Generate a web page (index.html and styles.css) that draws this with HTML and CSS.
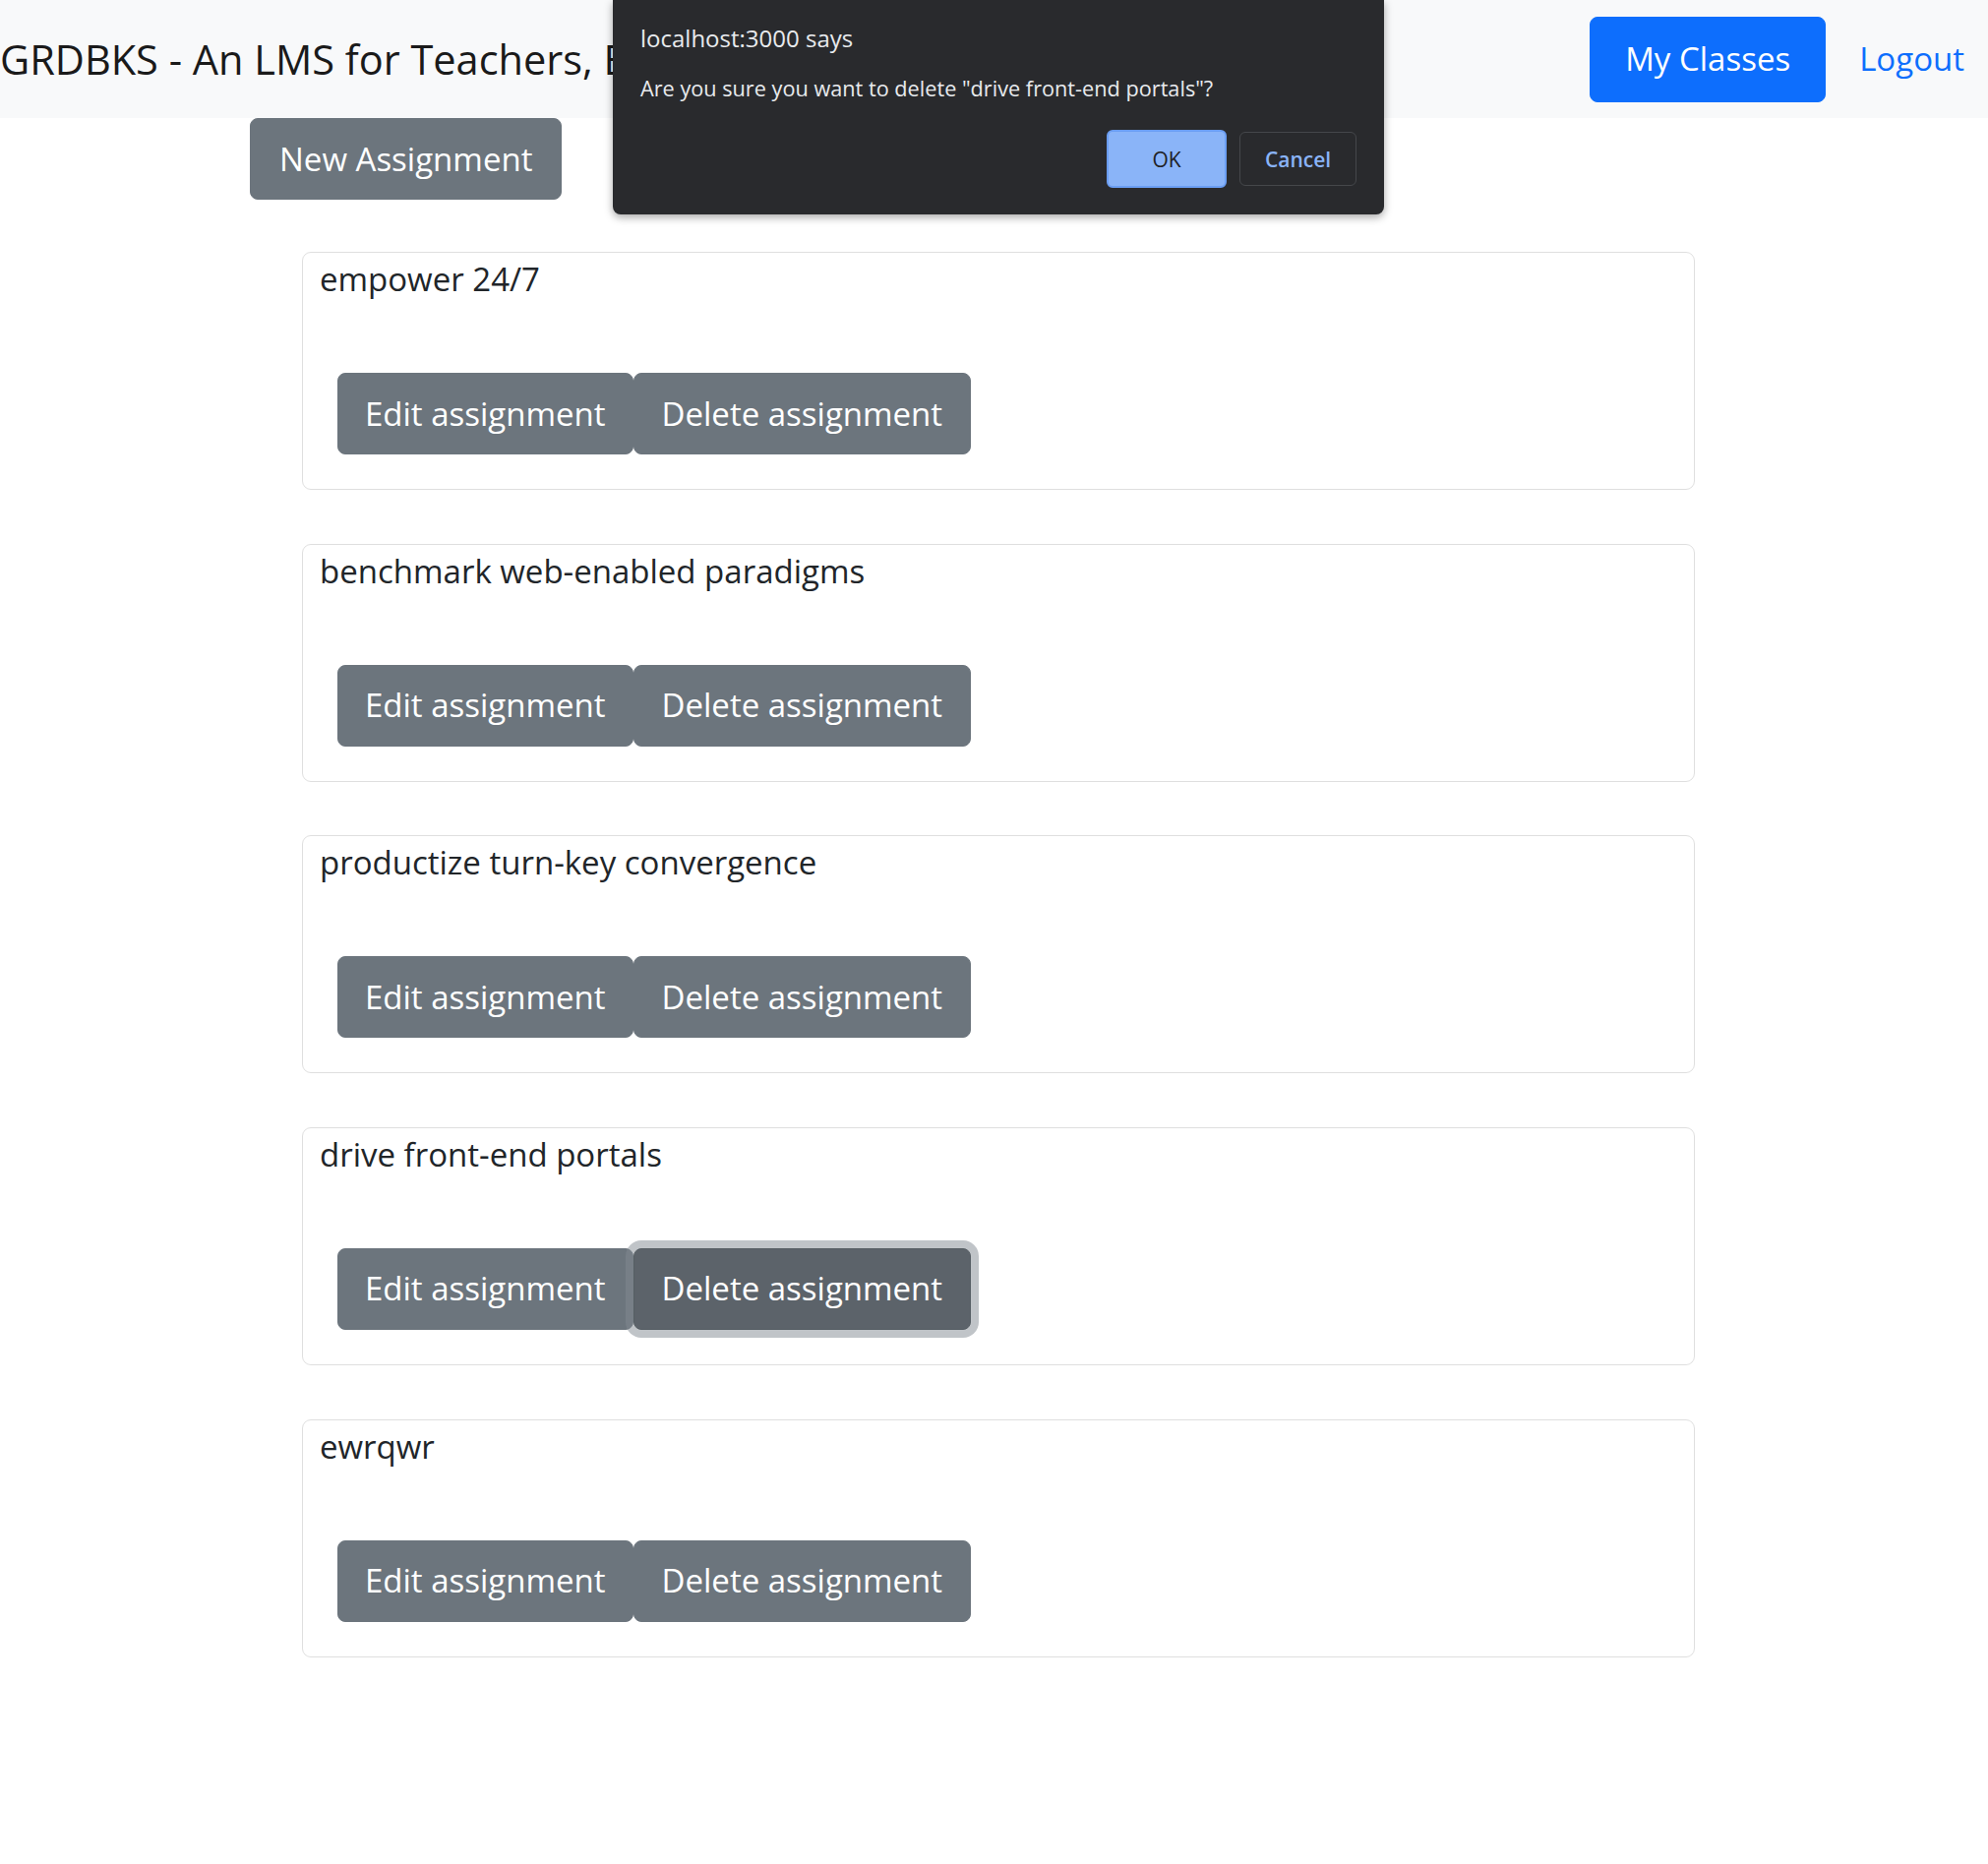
FILE: index.html
```html
<!DOCTYPE html>
<html lang="en">
<head>
<meta charset="utf-8">
<title>GRDBKS - Assignments</title>
<link rel="stylesheet" href="styles.css">
</head>
<body>
<nav class="navbar">
  <span class="brand">GRDBKS - An LMS for Teachers, By Teachers</span>
  <div class="nav-right">
    <a class="btn btn-primary" href="#">My Classes</a>
    <a class="nav-link" href="#">Logout</a>
  </div>
</nav>
<main class="page">
  <div class="toolbar">
    <button class="btn btn-secondary btn-new" type="button">New Assignment</button>
  </div>
  <ul class="assignments">
    <li class="card">
      <p class="card-title">empower 24/7</p>
      <div class="card-actions">
        <button class="btn btn-secondary" type="button">Edit assignment</button>
        <button class="btn btn-secondary btn-delete" type="button">Delete assignment</button>
      </div>
    </li>
    <li class="card">
      <p class="card-title">benchmark web-enabled paradigms</p>
      <div class="card-actions">
        <button class="btn btn-secondary" type="button">Edit assignment</button>
        <button class="btn btn-secondary btn-delete" type="button">Delete assignment</button>
      </div>
    </li>
    <li class="card">
      <p class="card-title">productize turn-key convergence</p>
      <div class="card-actions">
        <button class="btn btn-secondary" type="button">Edit assignment</button>
        <button class="btn btn-secondary btn-delete" type="button">Delete assignment</button>
      </div>
    </li>
    <li class="card">
      <p class="card-title">drive front-end portals</p>
      <div class="card-actions">
        <button class="btn btn-secondary" type="button">Edit assignment</button>
        <button class="btn btn-secondary btn-delete is-focused" type="button">Delete assignment</button>
      </div>
    </li>
    <li class="card">
      <p class="card-title">ewrqwr</p>
      <div class="card-actions">
        <button class="btn btn-secondary" type="button">Edit assignment</button>
        <button class="btn btn-secondary btn-delete" type="button">Delete assignment</button>
      </div>
    </li>
  </ul>
</main>
<div class="dialog" role="alertdialog">
  <div class="dialog-origin">localhost:3000 says</div>
  <div class="dialog-message">Are you sure you want to delete "drive front-end portals"?</div>
  <div class="dialog-actions">
    <button class="dialog-btn dialog-ok" type="button">OK</button>
    <button class="dialog-btn dialog-cancel" type="button">Cancel</button>
  </div>
</div>
</body>
</html>
```
FILE: styles.css
```css
html, body {
  margin: 0;
  padding: 0;
  background: #fff;
}

body {
  font-family: "Open Sans", "Noto Sans", sans-serif;
  color: #212529;
  position: relative;
  min-height: 1895px;
}

.navbar {
  display: flex;
  align-items: center;
  justify-content: space-between;
  height: 120px;
  box-sizing: border-box;
  padding: 0 24px 0 0;
  background: #f8f9fa;
}

.brand {
  font-size: 41.5px;
  line-height: normal;
  color: #1a1a1a;
  white-space: nowrap;
}

.nav-right {
  display: flex;
  align-items: center;
}

.nav-link {
  margin-left: 34px;
  font-size: 33px;
  line-height: 54px;
  color: #0d6efd;
  text-decoration: none;
}

.btn {
  display: inline-block;
  font-family: "Open Sans", "Noto Sans", sans-serif;
  font-size: 33px;
  line-height: 54px;
  padding: 13.5px 27px;
  border: 1px solid transparent;
  border-radius: 8px;
  color: #fff;
  text-decoration: none;
  white-space: nowrap;
  cursor: pointer;
}

.btn-primary {
  background: #0d6efd;
  border-color: #0d6efd;
  padding: 15.5px 35px;
}

.btn-secondary {
  background: #6c757d;
  border-color: #6c757d;
}

.btn-new {
  padding-left: 29px;
  padding-right: 29px;
}

.btn-delete {
  padding-left: 28px;
  padding-right: 28px;
}

.btn-secondary.is-focused {
  background: #5c636a;
  border-color: #565e64;
  box-shadow: 0 0 0 8px rgba(130, 138, 145, 0.5);
}

.toolbar {
  padding-left: 254px;
}

.assignments {
  list-style: none;
  margin: 53px 0 0 307px;
  padding: 0;
  width: 1416px;
}

.card {
  border: 1px solid rgba(0, 0, 0, 0.125);
  border-radius: 9px;
  padding: 0 17px;
  margin-bottom: 54.67px;
}

.card-title {
  margin: 0;
  font-size: 33px;
  line-height: 54px;
  color: #212529;
}

.card-actions {
  display: flex;
  margin: 68px 0 35px 18px;
}

.dialog {
  position: absolute;
  top: 0;
  left: 623px;
  width: 784px;
  box-sizing: border-box;
  padding: 23px 28px 27px 28px;
  background: #292a2d;
  color: #e8eaed;
  border-radius: 0 0 8px 8px;
  box-shadow: 0 3px 8px rgba(0, 0, 0, 0.35);
}

.dialog-origin {
  font-size: 24px;
  line-height: 32px;
}

.dialog-message {
  margin-top: 20px;
  font-size: 21.7px;
  line-height: 30px;
}

.dialog-actions {
  display: flex;
  justify-content: flex-end;
  align-items: center;
  gap: 13px;
  margin-top: 27px;
}

.dialog-btn {
  box-sizing: border-box;
  font-family: "Open Sans", "Noto Sans", sans-serif;
  font-size: 21px;
  border-radius: 6px;
  padding: 0;
}

.dialog-ok {
  width: 122px;
  height: 59px;
  background: #8ab4f8;
  border: 2px solid #6b9ef3;
  color: #202124;
  font-weight: 500;
}

.dialog-cancel {
  width: 119px;
  height: 55px;
  background: transparent;
  border: 1px solid #45474b;
  color: #8ab4f8;
  font-weight: 600;
}
```
